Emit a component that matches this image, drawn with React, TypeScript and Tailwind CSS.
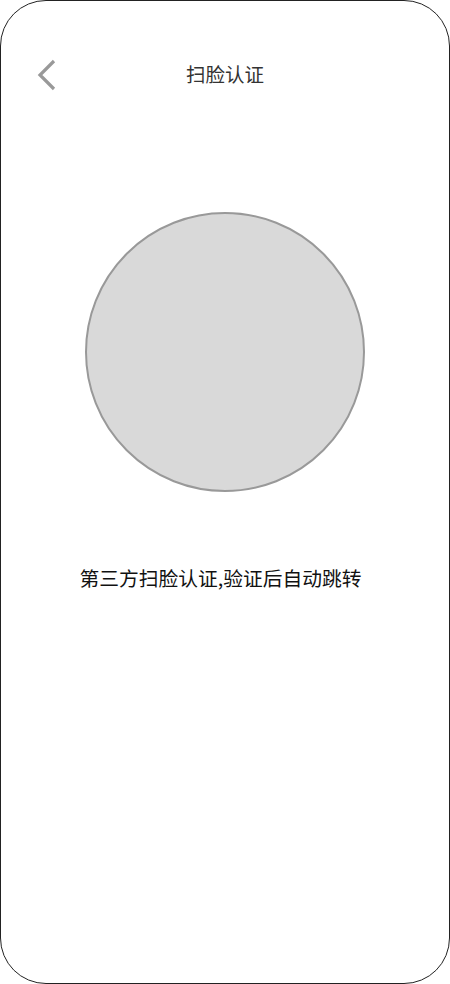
export default function App() {
  return (
    <div className="w-[450px] h-[984px] bg-white" style={{ fontFamily: '"Noto Sans CJK SC", "Noto Sans", sans-serif' }}>
      <div className="h-full w-full border border-[#222] rounded-[46px] flex flex-col items-center overflow-hidden">
        {/* header */}
        <div className="relative w-full h-[50px] mt-[48px] flex items-center justify-center">
          <svg className="absolute left-[35px] top-[10px]" width="22" height="32" viewBox="0 0 22 32" fill="none">
            <path d="M18 2 L4 16 L18 30" stroke="#999" strokeWidth="3.2" strokeLinejoin="miter" />
          </svg>
          <span className="text-[19.5px] text-[#333]">扫脸认证</span>
        </div>

        {/* face area */}
        <div className="mt-[113px] w-[280px] h-[280px] rounded-full bg-[#d9d9d9] border-2 border-[#999]" />

        <p className="mt-[71px] mr-[9px] text-[19.75px] text-[#111]">第三方扫脸认证,验证后自动跳转</p>
      </div>
    </div>
  )
}
